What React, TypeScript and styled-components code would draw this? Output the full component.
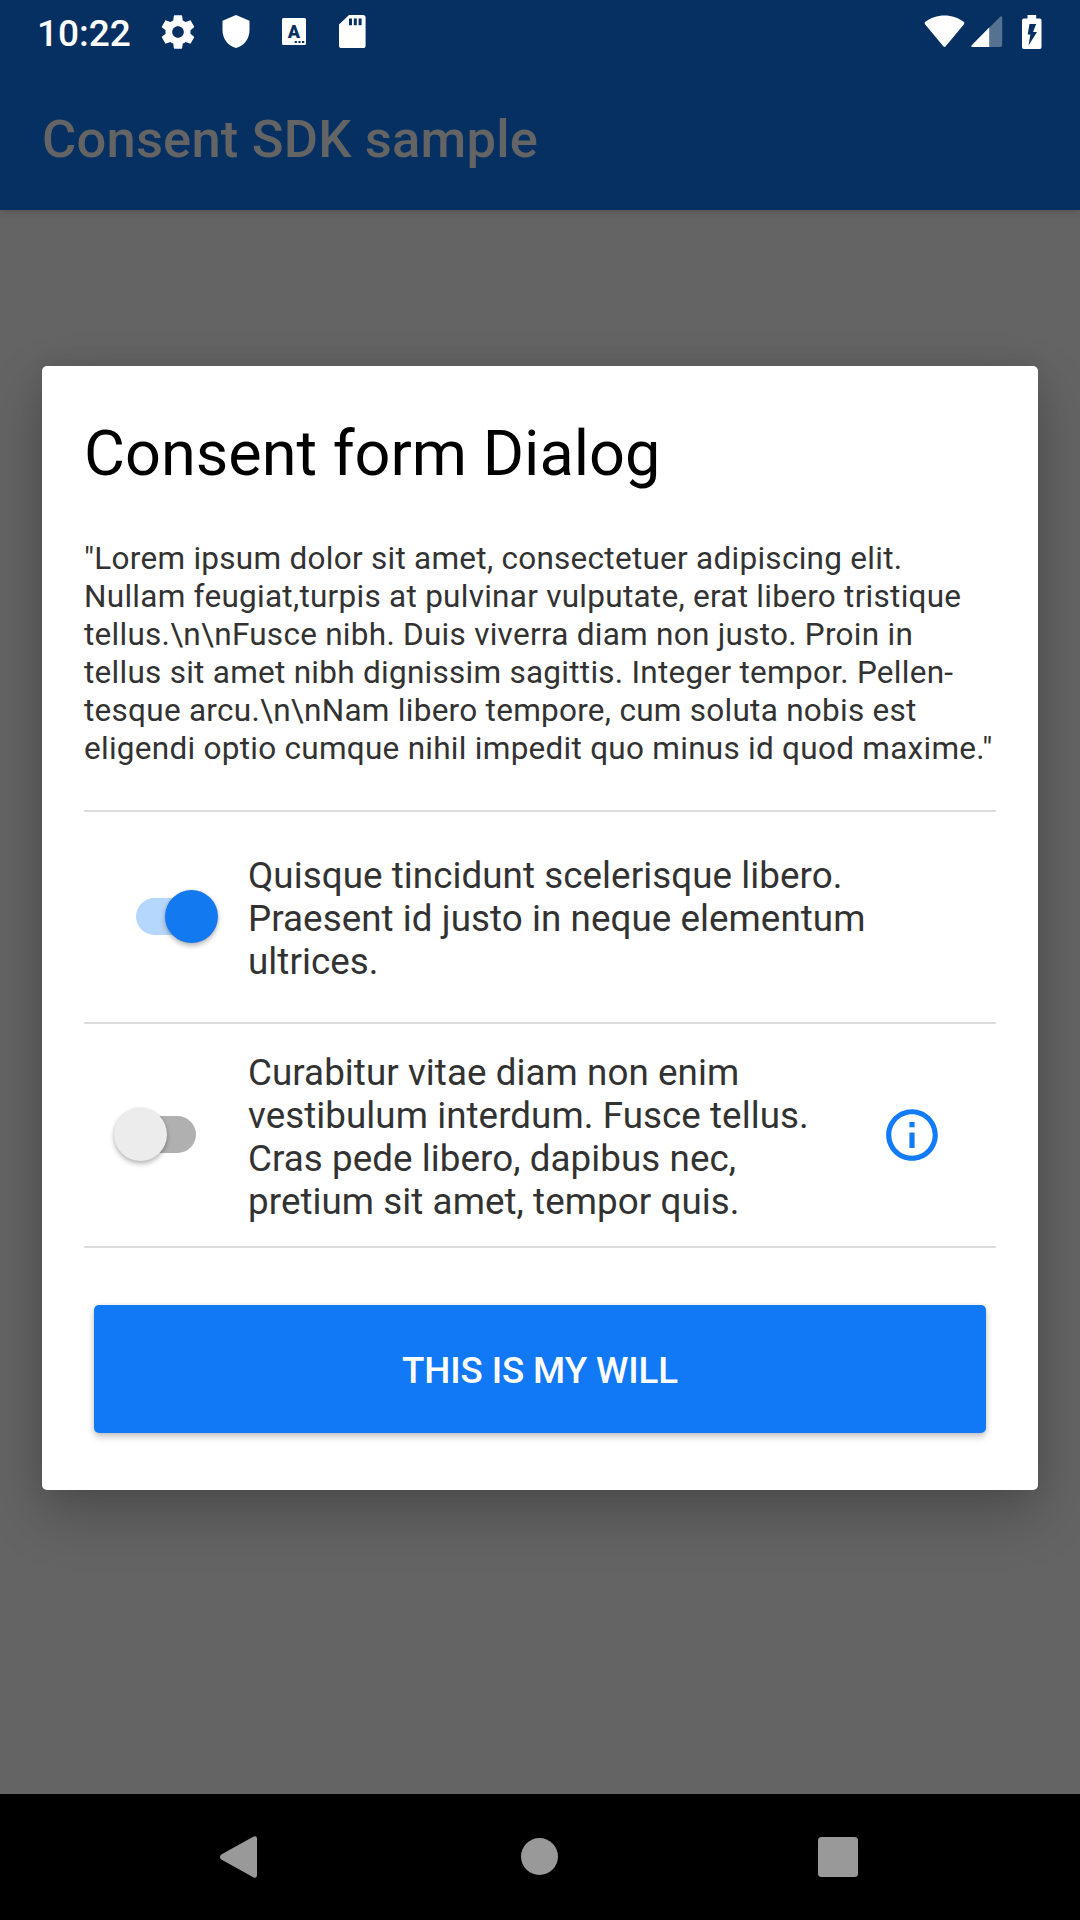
import React from "react";
import styled, { createGlobalStyle } from "styled-components";

const GlobalStyle = createGlobalStyle`
  *, *::before, *::after { box-sizing: border-box; }
  html, body { margin: 0; padding: 0; background: #646464; }
  body { font-family: Roboto, "Noto Sans", sans-serif; overflow: hidden; }
`;

const Screen = styled.div`
  width: 1080px;
  height: 1920px;
  display: flex;
  flex-direction: column;
  background: #646464;
  overflow: hidden;
`;

const Header = styled.header`
  flex: none;
  height: 210px;
  background: #053061;
  box-shadow: 0 2px 7px rgba(0, 0, 0, 0.16);
`;

const StatusBar = styled.div`
  height: 63px;
  padding: 0 38px 0 37px;
  display: flex;
  justify-content: space-between;
  align-items: center;
  color: #fff;
`;

const StatusGroup = styled.div`
  display: flex;
  align-items: center;
`;

const Clock = styled.span`
  width: 121px;
  font-size: 37px;
  line-height: 43px;
  font-weight: 500;
  padding-top: 3px;
`;

const StatusIcon = styled.svg<{ $gap?: number }>`
  display: block;
  flex: none;
  fill: currentColor;
  margin-left: ${(p) => p.$gap ?? 0}px;
`;

const KeyLetter = styled.text`
  font-size: 18px;
  font-weight: 900;
  fill: #053061;
  text-anchor: middle;
`;

const AppTitle = styled.h1`
  margin: 0;
  padding: 0 42px;
  height: 147px;
  line-height: 152px;
  font-size: 52.5px;
  font-weight: 500;
  letter-spacing: 0.2px;
  color: #646464;
`;

const Stage = styled.main`
  flex: 1;
  padding: 156px 42px 0;
`;

const Dialog = styled.section`
  height: 1124px;
  padding: 51px 42px 0;
  border-radius: 5px;
  background: #fff;
  box-shadow: 0 24px 56px rgba(0, 0, 0, 0.23), 0 0 26px rgba(0, 0, 0, 0.08);
`;

const DialogTitle = styled.h2`
  margin: 0;
  font-size: 63px;
  line-height: 74px;
  font-weight: 400;
  color: #000;
  white-space: nowrap;
`;

const Message = styled.p`
  margin: 49px 0 42px;
  font-size: 31.5px;
  line-height: 38px;
  letter-spacing: 0.27px;
  color: #323232;
  white-space: nowrap;
`;

const Option = styled.div<{ $height: number; $indent: number }>`
  height: ${(p) => p.$height}px;
  padding: 0 0 1px ${(p) => p.$indent}px;
  border-top: 2px solid #dcdcdc;
  display: flex;
  align-items: center;
`;

const OptionText = styled.p<{ $gap: number; $drop: number }>`
  margin: ${(p) => p.$drop}px 0 0 ${(p) => p.$gap}px;
  width: 638px;
  font-size: 36.75px;
  line-height: 43px;
  letter-spacing: 0.065px;
  color: #323232;
  white-space: nowrap;
`;

const Switch = styled.button<{ $on: boolean }>`
  flex: none;
  width: 82px;
  height: 53px;
  padding: 0;
  border: 0;
  background: none;
  display: flex;
  align-items: center;
  justify-content: ${(p) => (p.$on ? "flex-start" : "flex-end")};
`;

const Track = styled.span<{ $on: boolean }>`
  width: 75px;
  height: 37px;
  border-radius: 19px;
  background: ${(p) => (p.$on ? "#b5d6fd" : "#b0b0b0")};
  display: flex;
  align-items: center;
  justify-content: ${(p) => (p.$on ? "flex-end" : "flex-start")};
`;

const Thumb = styled.span<{ $on: boolean }>`
  flex: none;
  width: 53px;
  height: 53px;
  margin: 0 -7px;
  border-radius: 50%;
  background: ${(p) => (p.$on ? "#1279f0" : "#ececec")};
  box-shadow: 0 3px 5px rgba(0, 0, 0, 0.26), 0 0 3px rgba(0, 0, 0, 0.1);
`;

const InfoButton = styled.button`
  flex: none;
  width: 62px;
  height: 62px;
  margin-left: -5px;
  padding: 0;
  border: 0;
  background: none;
  color: #127bfa;
  & > svg { display: block; fill: currentColor; }
`;

const Actions = styled.div`
  border-top: 2px solid #dcdcdc;
  padding: 57px 10px 0;
`;

const ConfirmButton = styled.button`
  display: block;
  width: 100%;
  height: 128px;
  padding: 3px 0 0;
  border: 0;
  border-radius: 5px;
  background: #1279f6;
  color: #fff;
  font-family: inherit;
  font-size: 36.75px;
  font-weight: 500;
  line-height: 43px;
  letter-spacing: -0.13px;
  box-shadow: 0 4px 7px rgba(0, 0, 0, 0.22), 0 0 4px rgba(0, 0, 0, 0.08);
`;

const NavBar = styled.nav`
  flex: none;
  height: 126px;
  background: #000;
  display: flex;
  align-items: center;
  justify-content: space-between;
  padding: 0 211px 0 208px;
`;

const NavIcon = styled.svg`
  display: block;
  fill: #999;
`;

function Toggle({ on }: { on: boolean }) {
  return (
    <Switch $on={on} role="switch" aria-checked={on}>
      <Track $on={on}>
        <Thumb $on={on} />
      </Track>
    </Switch>
  );
}

export default function App() {
  return (
    <>
      <GlobalStyle />
      <Screen>
        <Header>
          <StatusBar>
            <StatusGroup>
              <Clock>10:22</Clock>
              <StatusIcon width="40" height="40" viewBox="0 0 24 24">
                <path d="M19.43 12.98c.04-.32.07-.64.07-.98s-.03-.66-.07-.98l2.11-1.65c.19-.15.24-.42.12-.64l-2-3.46c-.12-.22-.39-.3-.61-.22l-2.49 1c-.52-.4-1.08-.73-1.69-.98l-.38-2.65C14.46 2.18 14.25 2 14 2h-4c-.25 0-.46.18-.49.42l-.38 2.65c-.61.25-1.17.59-1.69.98l-2.49-1c-.23-.09-.49 0-.61.22l-2 3.46c-.13.22-.07.49.12.64l2.11 1.65c-.04.32-.07.65-.07.98s.03.66.07.98l-2.11 1.65c-.19.15-.24.42-.12.64l2 3.46c.12.22.39.3.61.22l2.49-1c.52.4 1.08.73 1.69.98l.38 2.65c.03.24.24.42.49.42h4c.25 0 .46-.18.49-.42l.38-2.65c.61-.25 1.17-.59 1.69-.98l2.49 1c.23.09.49 0 .61-.22l2-3.46c.12-.22.07-.49-.12-.64l-2.11-1.65zM12 15.5c-1.93 0-3.5-1.57-3.5-3.5s1.57-3.5 3.5-3.5 3.5 1.57 3.5 3.5-1.57 3.5-3.5 3.5z" />
              </StatusIcon>
              <StatusIcon $gap={24} width="28" height="33" viewBox="0 0 28 33">
                <path d="M14 0 27.5 5.8V15c0 8.7-5.4 16-13.5 18C5.900 31 .5 23.700.5 15V5.800z" />
              </StatusIcon>
              <StatusIcon $gap={32} width="24" height="27" viewBox="0 0 24 27">
                <path
                  fillRule="evenodd"
                  d="M1.500 0h21Q24 0 24 1.500v24q0 1.500-1.500 1.500h-21Q0 27 0 25.500v-24Q0 0 1.500 0zM12.700 23v2h2.200v-2zM16.400 23v2h2.200v-2zM20 23v2h2.200v-2z"
                />
                <KeyLetter x="12" y="19.500">A</KeyLetter>
              </StatusIcon>
              <StatusIcon $gap={33} width="27" height="33" viewBox="0 0 27 33">
                <path
                  fillRule="evenodd"
                  d="M10 0h14q2.600 0 2.600 2.600v27.800q0 2.600-2.600 2.600H2.600Q0 33 0 30.400V9.500zM10 3.500v6.700h3V3.500zM14.800 3.500v6.700h3V3.500zM19.600 3.500v6.700h3V3.500z"
                />
              </StatusIcon>
            </StatusGroup>
            <StatusGroup>
              <StatusIcon width="41" height="33" viewBox="0 0 41 33">
                <path d="M1 9.200Q0 7.800 1.300 6.800C6.500 2.800 13 .5 20.500.5s14 2.300 19.200 6.300q1.300 1 .3 2.400L21.700 31.300q-1.200 1.400-2.400 0z" />
              </StatusIcon>
              <StatusIcon $gap={6} width="32" height="33" viewBox="0 0 32 33">
                <path opacity=".32" d="M28.700 2.300Q31.200 0 31.200 3.200V30q0 2-2 2H2Q-1 32 1 29.900z" />
                <path d="M18.200 12.500V32H2Q-1 32 1 29.900z" />
              </StatusIcon>
              <StatusIcon $gap={19} width="20" height="34" viewBox="0 0 20 34">
                <path
                  fillRule="evenodd"
                  d="M5.500 0h8.700v3.500h3.600Q19.500 3.500 19.500 5.200v27q0 1.800-1.800 1.800H1.800Q0 34 0 32.200v-27Q0 3.500 1.800 3.500h3.700zM7.500 9 5.700 19.500h2.700L6.500 30.500 15 17h-3.900l3-8z"
                />
              </StatusIcon>
            </StatusGroup>
          </StatusBar>
          <AppTitle>Consent SDK sample</AppTitle>
        </Header>
        <Stage>
          <Dialog role="dialog" aria-labelledby="consent-title">
            <DialogTitle id="consent-title">Consent form Dialog</DialogTitle>
            <Message>
              "Lorem ipsum dolor sit amet, consectetuer adipiscing elit.
              <br />
              Nullam feugiat,turpis at pulvinar vulputate, erat libero tristique
              <br />
              {"tellus.\\n\\nFusce nibh. Duis viverra diam non justo. Proin in"}
              <br />
              tellus sit amet nibh dignissim sagittis. Integer tempor. Pellen-
              <br />
              {"tesque arcu.\\n\\nNam libero tempore, cum soluta nobis est"}
              <br />
              eligendi optio cumque nihil impedit quo minus id quod maxime."
            </Message>
            <Option $height={212} $indent={52}>
              <Toggle on />
              <OptionText $gap={30} $drop={3}>
                Quisque tincidunt scelerisque libero.
                <br />
                Praesent id justo in neque elementum
                <br />
                ultrices.
              </OptionText>
            </Option>
            <Option $height={224} $indent={30}>
              <Toggle on={false} />
              <OptionText $gap={52} $drop={5}>
                Curabitur vitae diam non enim
                <br />
                vestibulum interdum. Fusce tellus.
                <br />
                Cras pede libero, dapibus nec,
                <br />
                pretium sit amet, tempor quis.
              </OptionText>
              <InfoButton aria-label="More information">
                <svg width="62" height="62" viewBox="0 0 24 24">
                  <path d="M11 7h2v2h-2zm0 4h2v6h-2zm1-9C6.480 2 2 6.480 2 12s4.480 10 10 10 10-4.480 10-10S17.520 2 12 2zm0 18c-4.410 0-8-3.590-8-8s3.590-8 8-8 8 3.590 8 8-3.590 8-8 8z" />
                </svg>
              </InfoButton>
            </Option>
            <Actions>
              <ConfirmButton>THIS IS MY WILL</ConfirmButton>
            </Actions>
          </Dialog>
        </Stage>
        <NavBar>
          <NavIcon width="64" height="42" viewBox="0 0 64 42">
            <path d="M13.300 18.600 45.200.7Q49 -1 49 3v36q0 4-3.800 2.300L13.300 23.400q-2.600-2.400 0-4.800z" />
          </NavIcon>
          <NavIcon width="37" height="38" viewBox="0 0 37 38">
            <circle cx="18.500" cy="18.500" r="18.500" />
          </NavIcon>
          <NavIcon width="62" height="40" viewBox="0 0 62 40">
            <rect x="11" width="40" height="40" rx="3.500" />
          </NavIcon>
        </NavBar>
      </Screen>
    </>
  );
}
